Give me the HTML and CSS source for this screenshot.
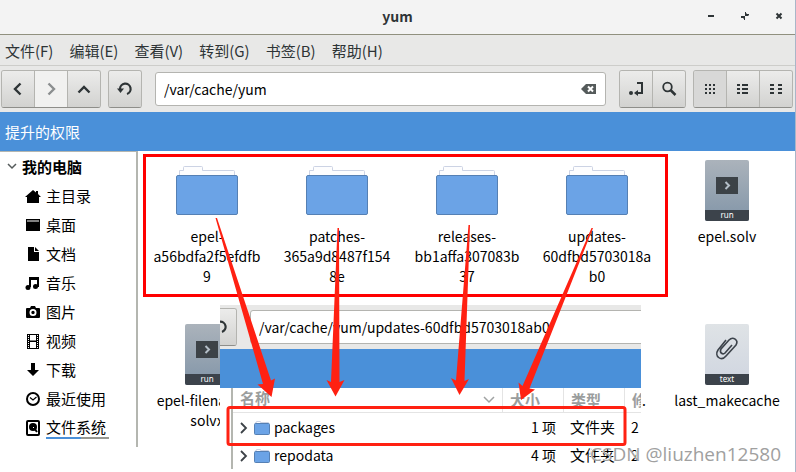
FILE: index.html
```
<!DOCTYPE html>
<html lang="zh-CN">
<head>
    <meta charset="UTF-8">
    <meta name="viewport" content="width=device-width, initial-scale=1.0">
    <title>yum</title>
    <link rel="stylesheet" href="styles.css">
</head>
<body>
    <!-- Shared icons -->
    <svg class="defs" width="0" height="0" aria-hidden="true">
        <symbol id="folder" viewBox="0 0 64 64">
            <path d="M4.500 18v-5.500h4v-3q0-1 1-1h17q1 0 1 1v3h31q1 0 1 1v5" fill="#fdfdfe" stroke="#ccd3e4"/>
            <rect x="1.500" y="17.500" width="61" height="39" rx="1.500" fill="#6ba3e6" stroke="#5580b4"/>
        </symbol>
        <symbol id="folder-small" viewBox="0 0 16 16">
            <path d="M1.500 5V2.500h1V1.500h4v1h8V5" fill="#fdfdfe" stroke="#ccd3e4"/>
            <rect x=".5" y="3.500" width="15" height="11" rx="1" fill="#6ba3e6" stroke="#5580b4"/>
        </symbol>
        <symbol id="run-file" viewBox="0 0 64 64">
            <rect x="10" y="2" width="44" height="61" rx="2" fill="url(#steel)"/>
            <path d="M10 52h44v9q0 2-2 2h-40q-2 0-2-2z" fill="#3c434b"/>
            <rect x="21" y="19" width="22" height="17" fill="#3c4247"/>
            <path d="M30.500 24l3.500 3.500-3.500 3.500" fill="none" stroke="#b4bec8" stroke-width="2"/>
        </symbol>
        <symbol id="text-file" viewBox="0 0 64 64">
            <rect x="10" y="2" width="44" height="61" rx="2" fill="url(#paper)"/>
            <path d="M10 52h44v9q0 2-2 2h-40q-2 0-2-2z" fill="#3c434b"/>
            <path d="M31 18l-8 10c-4 6 3 12 8 6l10-11c3-5-3-9-7-5l-8 9c-2 4 2 6 4 4l7-8" fill="none" stroke="#3c434b" stroke-width="1.600"/>
        </symbol>
        <symbol id="reload" viewBox="0 0 16 16">
            <path d="M3 8a5.300 5.300 0 1 1 7 5" fill="none" stroke="currentColor" stroke-width="2.200"/>
            <path d="M0 7.500h7l-3.500 4.500z" fill="currentColor"/>
        </symbol>
        <linearGradient id="steel" x1="0" y1="0" x2="0" y2="1">
            <stop offset="0" stop-color="#abb3bb"/>
            <stop offset="1" stop-color="#8295a8"/>
        </linearGradient>
        <linearGradient id="paper" x1="0" y1="0" x2="0" y2="1">
            <stop offset="0" stop-color="#dfe3e6"/>
            <stop offset="1" stop-color="#cfd5e0"/>
        </linearGradient>
    </svg>

    <header class="titlebar">
        <h1>yum</h1>
        <div class="window-buttons">
            <button aria-label="最小化"><svg width="12" height="12"><path d="M3 6h6" stroke="#2e3436" stroke-width="2"/></svg></button>
            <button aria-label="还原"><svg width="12" height="12"><path d="M6 2h1v1l1 1h2v1L9 6H6zM2 6h4v4H5V9L4 8H2z" fill="#2e3436"/></svg></button>
            <button aria-label="关闭"><svg width="12" height="12"><path d="M3.500 3.500l5 5M8.500 3.500l-5 5" stroke="#2e3436" stroke-width="2"/></svg></button>
        </div>
    </header>

    <nav class="menubar">
        <a href="#">文件(F)</a>
        <a href="#">编辑(E)</a>
        <a href="#">查看(V)</a>
        <a href="#">转到(G)</a>
        <a href="#">书签(B)</a>
        <a href="#">帮助(H)</a>
    </nav>

    <div class="toolbar">
        <div class="group">
            <button aria-label="后退"><svg width="16" height="16"><path d="M10.500 2.500L5 8l5.500 5.500" fill="none" stroke="currentColor" stroke-width="2.400"/></svg></button>
            <button aria-label="前进" disabled><svg width="16" height="16"><path d="M5.500 2.500L11 8l-5.500 5.500" fill="none" stroke="currentColor" stroke-width="2.400"/></svg></button>
            <button aria-label="上级"><svg width="16" height="16"><path d="M2.500 11.500L8 6l5.500 5.500" fill="none" stroke="currentColor" stroke-width="2.400"/></svg></button>
        </div>
        <div class="group reload">
            <button aria-label="刷新"><svg width="16" height="16"><use href="#reload"/></svg></button>
        </div>
        <div class="location">
            <input type="text" aria-label="位置" value="/var/cache/yum">
            <button aria-label="清除"><svg width="16" height="12"><path d="M0 6l5-5h10v10H5z" fill="#555b5b"/><path d="M7 3.500l5 5M12 3.500l-5 5" stroke="#fff" stroke-width="2"/></svg></button>
        </div>
        <div class="group">
            <button aria-label="切换位置"><svg width="16" height="16"><circle cx="3" cy="12" r="2" fill="currentColor"/><path d="M9 2h5v10H9" fill="none" stroke="currentColor" stroke-width="2"/><path d="M6 12l4-3v6z" fill="currentColor"/></svg></button>
            <button aria-label="搜索"><svg width="16" height="16"><circle cx="6.500" cy="6" r="4.300" fill="none" stroke="currentColor" stroke-width="1.800"/><path d="M9.500 9l5 5" stroke="currentColor" stroke-width="2.500"/></svg></button>
        </div>
        <div class="group views">
            <button class="active" aria-label="图标视图"><svg width="16" height="16"><path d="M3 4h10M3 8h10M3 12h10" stroke="currentColor" stroke-width="2" stroke-dasharray="2"/></svg></button>
            <button aria-label="列表视图"><svg width="16" height="16"><path d="M2 4h3M2 8h3M2 12h3M7 4h6M7 8h6M7 12h6" stroke="currentColor" stroke-width="2"/></svg></button>
            <button aria-label="紧凑视图"><svg width="16" height="16"><path d="M2 4h4M2 8h4M2 12h4M10 4h4M10 8h4M10 12h4" stroke="currentColor" stroke-width="2"/></svg></button>
        </div>
    </div>

    <div class="notice">提升的权限</div>

    <div class="content">
        <aside class="sidebar">
            <h2><svg width="10" height="16"><path d="M1 5l4 4 4-4" fill="none" stroke="#555b5b" stroke-width="1.500"/></svg>我的电脑</h2>
            <ul>
                <li><a href="#"><svg width="16" height="16"><path d="M0 9l8-7 3 2.500V3h2v3l3 3h-2v6H2V9z"/></svg>主目录</a></li>
                <li><a href="#"><svg width="16" height="16"><path d="M1 2h14v12H1z"/><path d="M2 4h12" stroke="#fff"/></svg>桌面</a></li>
                <li><a href="#"><svg width="16" height="16"><path d="M3 1h6v5h5v9H3z"/><path d="M10 1l4 4h-4z"/></svg>文档</a></li>
                <li><a href="#"><svg width="16" height="16"><path d="M5 12V3h8v9M5 4h8" fill="none" stroke="#000" stroke-width="2"/><circle cx="3" cy="12.500" r="2.500"/><circle cx="10.500" cy="11.500" r="2.500"/></svg>音乐</a></li>
                <li><a href="#"><svg width="16" height="16"><path d="M2 4h3l1-2h4l1 2h3q1 0 1 1v8q0 1-1 1H2q-1 0-1-1V5q0-1 1-1z"/><circle cx="8" cy="8.500" r="2.600" stroke="#fff" stroke-width="1.800"/></svg>图片</a></li>
                <li><a href="#"><svg width="16" height="16"><path d="M2 1h12v15H2z"/><path d="M5 2h6v5.500H5zM5 9h6v6H5z" fill="#fff"/><path d="M3.500 2v13M12.500 2v13" stroke="#fff" stroke-dasharray="1"/></svg>视频</a></li>
                <li><a href="#"><svg width="16" height="16"><path d="M6 1h4v7h4l-6 6-6-6h4z"/></svg>下载</a></li>
                <li><a href="#"><svg width="16" height="16"><circle cx="8" cy="8" r="6" fill="none" stroke="#000" stroke-width="2"/><path d="M5 6.500L8 9l3.500-3" fill="none" stroke="#000" stroke-width="1.200"/></svg>最近使用</a></li>
                <li><a href="#"><svg width="16" height="16"><rect x="2" y="1" width="12" height="14" rx="1" fill="none" stroke="#000" stroke-width="2"/><circle cx="8" cy="7" r="4"/><path d="M8 7l4 4" stroke="#fff"/><path d="M9 8l3 4" stroke="#000" stroke-width="2"/></svg><span class="disk">文件系统</span></a></li>
            </ul>
        </aside>

        <main class="files">
            <div class="file"><svg class="icon"><use href="#folder"/></svg><span>epel-a56bdfa2f5efdfb9</span></div>
            <div class="file"><svg class="icon"><use href="#folder"/></svg><span>patches-365a9d8487f1548e</span></div>
            <div class="file"><svg class="icon"><use href="#folder"/></svg><span>releases-bb1affa307083b37</span></div>
            <div class="file"><svg class="icon"><use href="#folder"/></svg><span>updates-60dfbd5703018ab0</span></div>
            <div class="file"><svg class="icon"><use href="#run-file"/><text x="32" y="60">run</text></svg><span>epel.solv</span></div>
            <div class="file"><svg class="icon"><use href="#run-file"/><text x="32" y="60">run</text></svg><span>epel-filenames.<br>solvx</span></div>
            <div class="file covered"><svg class="icon"></svg><span>.</span></div>
            <div class="file"><svg class="icon"><use href="#text-file"/><text x="32" y="60">text</text></svg><span>last_makecache</span></div>
        </main>
    </div>

    <!-- Second window: contents of updates-60dfbd5703018ab0 -->
    <section class="inset">
        <div class="toolbar">
            <div class="group">
                <button aria-label="刷新"><svg width="16" height="16"><use href="#reload"/></svg></button>
            </div>
            <div class="location">
                <input type="text" aria-label="位置" value="/var/cache/yum/updates-60dfbd5703018ab0">
            </div>
        </div>
        <div class="notice"></div>
        <table>
            <thead>
                <tr>
                    <th class="name">名称<svg width="12" height="8"><path d="M1 1l5 5 5-5" fill="none" stroke="#a0a3a3" stroke-width="1.500"/></svg></th>
                    <th class="size">大小</th>
                    <th class="type">类型</th>
                    <th class="date">修</th>
                </tr>
            </thead>
            <tbody>
                <tr>
                    <td class="name"><svg width="10" height="12"><path d="M1 1l5 5-5 5" fill="none" stroke="#3c4247" stroke-width="1.800"/></svg><svg width="16" height="16"><use href="#folder-small"/></svg>packages</td>
                    <td class="size">1 项</td>
                    <td class="type">文件夹</td>
                    <td class="date">2</td>
                </tr>
                <tr>
                    <td class="name"><svg width="10" height="12"><path d="M1 1l5 5-5 5" fill="none" stroke="#3c4247" stroke-width="1.800"/></svg><svg width="16" height="16"><use href="#folder-small"/></svg>repodata</td>
                    <td class="size">4 项</td>
                    <td class="type">文件夹</td>
                    <td class="date">2</td>
                </tr>
            </tbody>
        </table>
    </section>

    <!-- Red boxes and arrows -->
    <svg class="marks" width="796" height="472" aria-hidden="true">
        <rect x="144.500" y="155.500" width="522" height="140" fill="none" stroke="#f00" stroke-width="3"/>
        <rect x="228" y="407.500" width="397" height="37" rx="2" fill="none" stroke="#ff2112" stroke-width="3"/>
        <g fill="#ff2112">
            <path d="M215.500 218h1.500L271 380.500l4-2-3.500 18.500L257.500 384.500l5.500-.5z"/>
            <path d="M337.500 228h1.500L339.500 382l5-2-9 16.500-9-16.500 4.500 2z"/>
            <path d="M468.500 225h1.500L464.500 381l4.500-2-9.500 16-8.500-17 5 2.500z"/>
            <path d="M591.500 228h1.500L529.500 388.500l5.500 1-14 10.500-2.500-17.500 4 3.500z"/>
        </g>
    </svg>

    <div class="watermark">CSDN @liuzhen12580</div>
</body>
</html>
```
FILE: styles.css
```
* {
    box-sizing: border-box;
}
body {
    display: flex;
    flex-direction: column;
    position: relative;
    min-height: 100vh;
    margin: 0;
    border-right: 1px solid #a9b6c8;
    border-bottom: 1px solid #a9b2c4;
    background: #fff;
    color: #000;
    font-family: "Noto Sans CJK SC", sans-serif;
    font-size: 14px;
    line-height: 20px;
}
a {
    color: inherit;
    text-decoration: none;
}
button {
    padding: 0;
    border: none;
    background: none;
    color: #2e3436;
}
svg {
    flex: none;
}
.defs {
    position: absolute;
}

/* Title bar */
.titlebar {
    display: grid;
    grid-template-columns: 1fr auto 1fr;
    align-items: center;
    height: 35px;
    padding-bottom: 3px;
    border-bottom: 1px solid #90907f;
    background: #f3f3f3;
}
.titlebar h1 {
    grid-column: 2;
    margin: 0;
    color: #2e3436;
    font-size: 14px;
    line-height: 20px;
}
.window-buttons {
    display: flex;
    justify-content: flex-end;
    gap: 22px;
    padding-right: 10px;
}
.window-buttons button {
    display: flex;
}

/* Menu and toolbar */
.menubar {
    display: flex;
    align-items: center;
    gap: 16px;
    height: 31px;
    padding: 2px 5px 0;
    border-bottom: 1px solid #cdcdca;
    background: #e8e8e7;
    color: #2e3436;
    font-size: 15px;
}
.toolbar {
    display: flex;
    align-items: center;
    height: 46px;
    padding: 0 2px 0 1px;
    background: #e8e8e7;
}
.group {
    display: flex;
    height: 38px;
    border: 1px solid #b4b4b0;
    border-bottom-color: #8e8e8a;
    border-radius: 3px;
    overflow: hidden;
}
.group button {
    display: flex;
    align-items: center;
    justify-content: center;
    width: 32px;
    background: linear-gradient(#ececeb, #d2d2d0);
}
.group button + button {
    width: 33px;
    border-left: 1px solid #b4b4b0;
}
.group button:disabled {
    background: #f1f1f0;
    color: #8b8e8f;
}
.group button.active {
    background: #d8d8d7;
}
.reload,
.views {
    margin-left: 7px;
}
.location {
    display: flex;
    align-items: center;
    flex: 1;
    height: 34px;
    margin: 0 13px;
    padding: 0 8px 1px;
    border: 1px solid #b4b4b0;
    border-radius: 3px;
    background: #fff;
}
.location input {
    flex: 1;
    min-width: 0;
    padding: 0;
    border: none;
    outline: none;
    font: inherit;
}
.location button {
    display: flex;
}
.notice {
    height: 39px;
    padding: 0 5px;
    background: #4a90d9;
    color: #fff;
    font-size: 15px;
    line-height: 39px;
}

/* Sidebar */
.content {
    display: flex;
    align-items: flex-start;
    flex: 1;
}
.sidebar {
    flex: none;
    width: 138px;
    padding-bottom: 5px;
    border-top: 1px solid #b4b6b0;
    border-right: 2px solid #b4b6b0;
    font-size: 15px;
}
.sidebar h2 {
    display: flex;
    align-items: center;
    gap: 5px;
    height: 29px;
    margin: 0;
    padding-left: 7px;
    font-size: 15px;
}
.sidebar ul {
    margin: 0;
    padding: 0;
    list-style: none;
}
.sidebar a {
    display: flex;
    align-items: center;
    gap: 5px;
    height: 29px;
    padding-left: 25px;
}
.disk {
    padding-right: 3px;
    border-bottom: 2px solid;
    border-image: linear-gradient(to right, #4a90d9 55%, #969791 55%) 1;
}

/* Icon view */
.files {
    display: grid;
    flex: 1;
    grid-template-columns: repeat(auto-fill, 130px);
    grid-auto-rows: 164px;
    padding-left: 4px;
}
.file {
    display: flex;
    flex-direction: column;
    align-items: center;
    gap: 4px;
    padding: 7px 10px 0;
    text-align: center;
}
.file.covered {
    grid-column: 4;
    align-items: flex-end;
    padding-right: 16px;
}
.file span {
    max-width: 100%;
    overflow-wrap: break-word;
}
.icon {
    width: 64px;
    height: 64px;
}
.icon text {
    fill: #fff;
    font-family: "Noto Sans", sans-serif;
    font-size: 8px;
    text-anchor: middle;
}

/* Overlapping window */
.inset {
    position: absolute;
    top: 305px;
    bottom: 0;
    left: 220px;
    width: 421px;
    background: #fff;
    overflow: hidden;
}
.inset .toolbar {
    height: 44px;
    padding: 0;
}
.inset .group {
    margin-left: -17px;
}
.inset .location {
    margin-right: -4px;
}
.inset table {
    width: 410px;
    margin-left: 11px;
    border-left: 2px solid #b4b6b0;
    border-spacing: 0;
    table-layout: fixed;
}
.inset th,
.inset td {
    height: 28px;
    padding: 0 7px;
    overflow: hidden;
    white-space: nowrap;
    text-align: left;
}
.inset th {
    height: 25px;
    border-bottom: 1px solid #e4e4e4;
    color: #9a9d9d;
    font-size: 15px;
}
.inset th + th {
    border-left: 1px solid #e4e4e4;
}
.inset th svg {
    float: right;
    margin: 8px 0;
}
.inset td svg {
    margin: -3px 4px 0 0;
    vertical-align: middle;
}
.inset .name {
    width: 269px;
}
.inset .size,
.inset .type {
    width: 61px;
}
.inset td.size {
    text-align: right;
}
.inset td.type {
    font-size: 15px;
}
.inset .date {
    padding-right: 0;
}

.marks {
    position: absolute;
    top: 0;
    left: 0;
}
.watermark {
    position: absolute;
    right: 14px;
    bottom: 11px;
    color: #a0a0a0;
    font-family: "Open Sans", sans-serif;
    font-size: 19px;
    line-height: 28px;
    text-shadow: -1px -1px #fff;
}
```
